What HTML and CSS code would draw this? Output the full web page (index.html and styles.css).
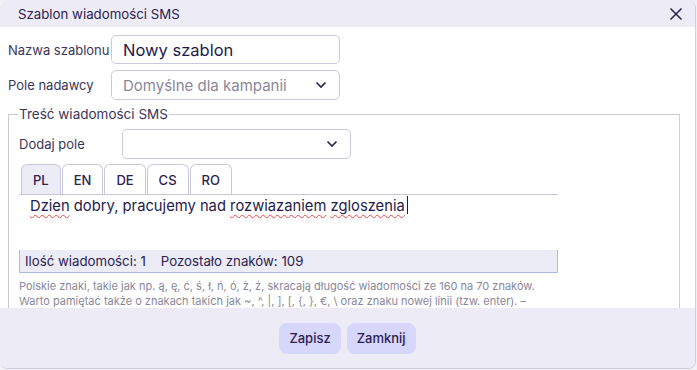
FILE: index.html
```html
<!DOCTYPE html>
<html lang="pl">
<head>
  <meta charset="UTF-8" />
  <meta name="viewport" content="width=device-width, initial-scale=1.0"/>
  <title>Szablon wiadomości SMS</title>
  <link rel="stylesheet" href="styles.css">
</head>
<body>

  <div class="dialog">
    <div class="dialog-head">
      <span class="dialog-title">Szablon wiadomości SMS</span>
      <button class="close-btn" aria-label="Zamknij">
        <svg width="14" height="14" viewBox="0 0 14 14"><path d="M1.5 1.5 L12.5 12.5 M12.5 1.5 L1.5 12.5" stroke="#2b2150" stroke-width="1.5" fill="none"/></svg>
      </button>
    </div>

    <div class="dialog-body">
      <div class="row">
        <label class="row-label" for="name">Nazwa szablonu</label>
        <input class="field" id="name" type="text" value="Nowy szablon">
      </div>
      <div class="row">
        <label class="row-label">Pole nadawcy</label>
        <div class="field select placeholder">
          <span>Domyślne dla kampanii</span>
          <svg class="chevron" width="12" height="8" viewBox="0 0 12 8"><path d="M1.5 1.5 L6 6 L10.5 1.5" stroke="#2b2150" stroke-width="1.6" fill="none"/></svg>
        </div>
      </div>

      <fieldset class="sms-box">
        <legend>Treść wiadomości SMS</legend>
        <div class="row add-row">
          <label class="row-label">Dodaj pole</label>
          <div class="field select">
            <span></span>
            <svg class="chevron" width="12" height="8" viewBox="0 0 12 8"><path d="M1.5 1.5 L6 6 L10.5 1.5" stroke="#2b2150" stroke-width="1.6" fill="none"/></svg>
          </div>
        </div>

        <div class="editor">
          <div class="tabs">
            <div class="tab active">PL</div>
            <div class="tab">EN</div>
            <div class="tab">DE</div>
            <div class="tab">CS</div>
            <div class="tab">RO</div>
          </div>
          <div class="message"><span class="typo">Dzien</span> dobry, pracujemy nad <span class="typo">rozwiazaniem</span> <span class="typo">zgloszenia</span><span class="caret"></span></div>
          <div class="counter">
            <span>Ilość wiadomości: 1</span>
            <span>Pozostało znaków: 109</span>
          </div>
        </div>

        <p class="hint">Polskie znaki, takie jak np. ą, ę, ć, ś, ł, ń, ó, ż, ź, skracają długość wiadomości ze 160 na 70 znaków.<br>
          Warto pamiętać także o znakach takich jak ~, ^, |, ], [, {, }, €, \ oraz znaku nowej linii (tzw. enter). –<br>
          zajmują one miejsce dwóch znaków w treści wiadomości.</p>
      </fieldset>
    </div>

    <div class="dialog-foot">
      <button class="btn">Zapisz</button>
      <button class="btn">Zamknij</button>
    </div>
  </div>

</body>
</html>
```

FILE: styles.css
```css
* { box-sizing: border-box; margin: 0; padding: 0; }
html, body {
  width: 100%; height: 100%;
  background: #f1f1f5;
  font-family: 'Inter', 'Noto Sans', sans-serif;
  color: #2b2150;
  overflow: hidden;
}
.dialog {
  width: 696px;
  height: 369px;
  display: flex;
  flex-direction: column;
  background: #fff;
  border: 1px solid #cfcde0;
  border-top: none;
  border-left: none;
  border-radius: 8px;
  overflow: hidden;
}
.dialog-head {
  height: 27px;
  flex: none;
  display: flex;
  align-items: center;
  justify-content: space-between;
  padding: 0 12px 0 18px;
  background: #ecebf6;
}
.dialog-title {
  font-size: 13.25px;
  font-weight: 400;
  color: #2b2150;
}
.close-btn {
  border: none;
  background: none;
  display: flex;
  cursor: pointer;
}
.dialog-body {
  flex: 1;
  overflow-y: scroll;
  padding: 8px 3px 20px 8px;
}
.dialog-body::-webkit-scrollbar { width: 12px; }
.dialog-body::-webkit-scrollbar-track { background: #fff; }
.dialog-body::-webkit-scrollbar-thumb {
  background: #cdccd8;
  border-radius: 6px;
}
.row {
  display: flex;
  align-items: center;
  margin-bottom: 6px;
}
.row-label {
  width: 103px;
  flex: none;
  font-size: 13px;
  color: #3b3656;
}
.field {
  width: 229px;
  height: 29px;
  border: 1px solid #cbc9de;
  border-radius: 5px;
  padding: 0 11px;
  font-family: inherit;
  font-size: 16.5px;
  color: #1f1a4c;
  background: #fff;
}
.select {
  display: flex;
  align-items: center;
  justify-content: space-between;
  height: 30px;
}
.placeholder { color: #8a8898; font-size: 15px; }
.chevron { flex: none; margin-right: 1px; }
.sms-box {
  border: 1px solid #c9c7dc;
  border-right-color: #cfcde0;
  margin: 4px 0 0 0;
  padding: 0 10px 0 10px;
  width: 672px;
}
.sms-box legend {
  font-size: 13.5px;
  color: #3b3656;
  padding: 0 1px;
  margin-left: -1px;
}
.add-row { margin: 7px 0 5px; }
.editor { width: 539px; }
.tabs {
  display: flex;
  gap: 1px;
  padding-left: 2px;
  border-bottom: 1px solid #c9c7dc;
}
.tab {
  height: 30px;
  padding: 0 11px;
  display: flex;
  align-items: center;
  border: 1px solid #c9c7dc;
  border-bottom: none;
  border-radius: 6px 6px 0 0;
  font-size: 13px;
  font-weight: 500;
  color: #2b2150;
  background: #fff;
}
.tab.active { background: #ececf6; }
.message {
  height: 55px;
  padding: 1px 11px;
  font-size: 14.75px;
  line-height: 20px;
  color: #1f1a4c;
}
.typo {
  text-decoration: underline wavy #e5484d;
  text-decoration-thickness: 1px;
  text-underline-offset: 3px;
}
.caret {
  display: inline-block;
  width: 1px;
  height: 18px;
  margin-left: 2px;
  vertical-align: -3px;
  background: #1f1a4c;
}
.counter {
  height: 23px;
  display: flex;
  align-items: center;
  gap: 15px;
  padding: 0 5px;
  background: #ececf6;
  border: 1px solid #a9bbe2;
  border-top: none;
  font-size: 13.25px;
  color: #2b2150;
}
.hint {
  margin-top: 6px;
  font-size: 11px;
  line-height: 15px;
  color: #8a8898;
  white-space: nowrap;
}
.dialog-foot {
  height: 60px;
  flex: none;
  display: flex;
  justify-content: center;
  align-items: center;
  gap: 6px;
  background: #ecebf6;
}
.btn {
  height: 31px;
  padding: 0 10px;
  border: none;
  border-radius: 8px;
  background: #d7d6fb;
  font-family: inherit;
  font-size: 13px;
  font-weight: 500;
  color: #2b2150;
  cursor: pointer;
}
```
